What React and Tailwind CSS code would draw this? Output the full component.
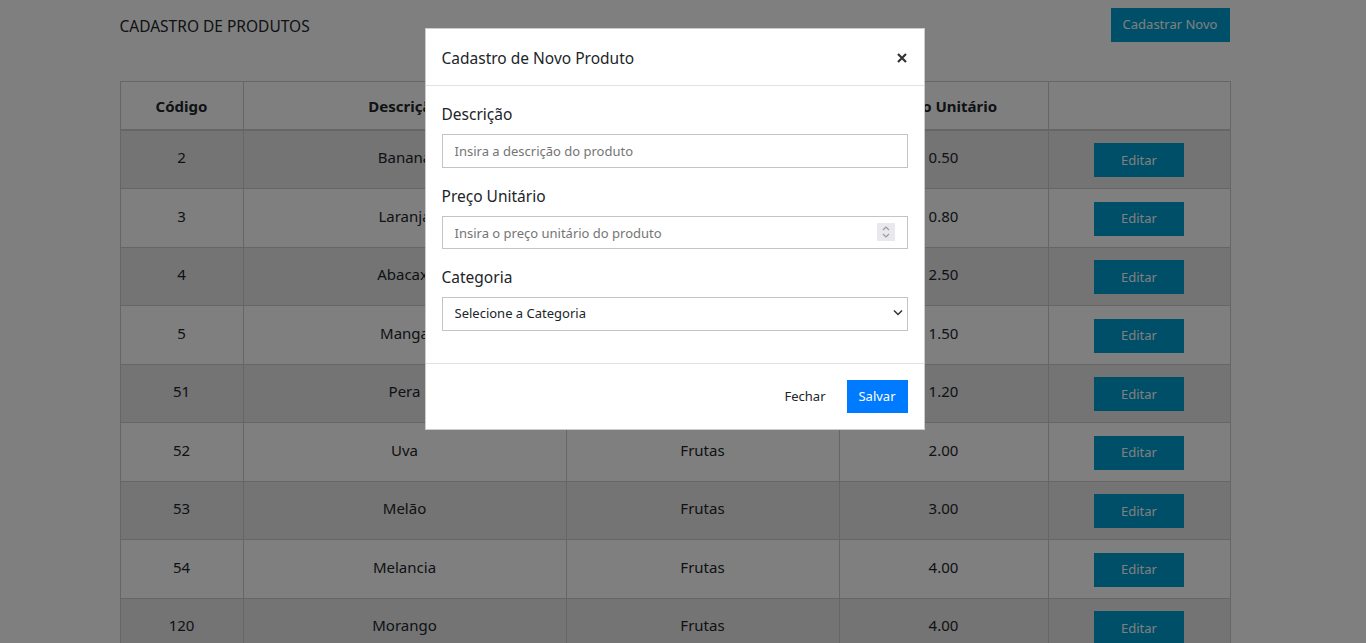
import React from 'react';

const produtos = [
  { codigo: 2, descricao: 'Banana', categoria: 'Frutas', preco: '0.50' },
  { codigo: 3, descricao: 'Laranja', categoria: 'Frutas', preco: '0.80' },
  { codigo: 4, descricao: 'Abacaxi', categoria: 'Frutas', preco: '2.50' },
  { codigo: 5, descricao: 'Manga', categoria: 'Frutas', preco: '1.50' },
  { codigo: 51, descricao: 'Pera', categoria: 'Frutas', preco: '1.20' },
  { codigo: 52, descricao: 'Uva', categoria: 'Frutas', preco: '2.00' },
  { codigo: 53, descricao: 'Melão', categoria: 'Frutas', preco: '3.00' },
  { codigo: 54, descricao: 'Melancia', categoria: 'Frutas', preco: '4.00' },
  { codigo: 120, descricao: 'Morango', categoria: 'Frutas', preco: '4.00' },
];

const font = { fontFamily: '"Noto Sans", "Open Sans", sans-serif' };

const ProdutoModal = () => (
  <div className="fixed inset-0 bg-black/50 overflow-hidden pr-[17px]">
    <div className="mx-auto mt-[28px] w-[500px] bg-white border border-black/20 text-[#212529]">
      {/* cabeçalho */}
      <div className="flex items-center justify-between h-[57px] px-4 border-b border-[#dee2e6]">
        <h5 className="text-[15.5px] leading-6 mt-[1px]">Cadastro de Novo Produto</h5>
        <button className="text-[#333] mt-[1px]">
          <svg width="12" height="12" viewBox="0 0 12 12" stroke="currentColor" strokeWidth="2.2">
            <path d="M2 2l8 8M10 2l-8 8" />
          </svg>
        </button>
      </div>

      {/* corpo */}
      <div className="p-4">
        <div className="mb-4">
          <label className="block text-[15.5px] leading-6 mb-2">Descrição</label>
          <input
            className="w-full h-[34px] px-3 border border-[#c4c4c4] text-[13px] placeholder:text-[#757575] outline-none"
            placeholder="Insira a descrição do produto"
          />
        </div>
        <div className="mb-4">
          <label className="block text-[15.5px] leading-6 mb-2">Preço Unitário</label>
          <div className="relative">
            <input
              className="w-full h-[33px] px-3 border border-[#c4c4c4] text-[13px] placeholder:text-[#757575] outline-none"
              placeholder="Insira o preço unitário do produto"
            />
            <div className="absolute right-[13px] top-[7px] w-[18px] h-[18px] bg-[#e9e9ed] flex flex-col items-center justify-center gap-[2px]">
              <svg width="8" height="5" viewBox="0 0 8 5" fill="none" stroke="#9a9a9a" strokeWidth="1.2">
                <path d="M1 4l3-3 3 3" />
              </svg>
              <svg width="8" height="5" viewBox="0 0 8 5" fill="none" stroke="#9a9a9a" strokeWidth="1.2">
                <path d="M1 1l3 3 3-3" />
              </svg>
            </div>
          </div>
        </div>
        <div className="mb-4">
          <label className="block text-[15.5px] leading-6 mb-2">Categoria</label>
          <div className="relative">
            <select className="w-full h-[34px] px-3 border border-[#c4c4c4] text-[13px] text-[#212529] bg-white appearance-none outline-none">
              <option>Selecione a Categoria</option>
            </select>
            <svg className="absolute right-[5px] top-[12px]" width="10" height="7" viewBox="0 0 10 7" fill="none" stroke="#333" strokeWidth="1.5">
              <path d="M1 1.5l4 4 4-4" />
            </svg>
          </div>
        </div>
      </div>

      {/* rodapé */}
      <div className="flex items-center justify-end gap-[9px] px-4 py-4 border-t border-[#dee2e6]">
        <button className="h-[33px] px-3 text-[13px] text-[#212529]">Fechar</button>
        <button className="h-[33px] w-[61px] text-[13px] text-white bg-[#007bff]">Salvar</button>
      </div>
    </div>
  </div>
);

const cell = 'border border-[#cdcdcd] text-center align-middle pt-[9.75px] pb-[13.75px]';

export default function App() {
  return (
    <div className="min-h-screen bg-white pr-[17px]" style={font}>
      <div className="mx-auto w-[1110px] text-[#212529]">
        <div className="flex items-center justify-between pt-2">
          <h4 className="text-[15.5px] leading-6 mt-[2px]">CADASTRO DE PRODUTOS</h4>
          <button className="h-[34px] w-[119px] bg-[#009ed2] text-white text-[13px]">Cadastrar Novo</button>
        </div>

        <table className="mt-[39px] w-full table-fixed border-collapse border border-[#cdcdcd] text-[15px]">
          <colgroup>
            <col className="w-[123px]" />
            <col className="w-[323px]" />
            <col className="w-[273px]" />
            <col className="w-[209px]" />
            <col className="w-[182px]" />
          </colgroup>
          <thead>
            <tr className="h-[48px]">
              <th className="border border-[#cdcdcd] border-b-2 font-bold pt-[2px]">Código</th>
              <th className="border border-[#cdcdcd] border-b-2 font-bold pt-[2px]">Descrição</th>
              <th className="border border-[#cdcdcd] border-b-2 font-bold pt-[2px]">Categoria</th>
              <th className="border border-[#cdcdcd] border-b-2 font-bold pt-[2px]">Preço Unitário</th>
              <th className="border border-[#cdcdcd] border-b-2"></th>
            </tr>
          </thead>
          <tbody>
            {produtos.map((p, i) => (
              <tr key={p.codigo} className={i % 2 === 0 ? 'bg-[#e8e8e8]' : 'bg-white'}>
                <td className={cell}>{p.codigo}</td>
                <td className={cell}>{p.descricao}</td>
                <td className={cell}>{p.categoria}</td>
                <td className={cell}>{p.preco}</td>
                <td className="border border-[#cdcdcd] text-center align-middle pt-[12.75px] pb-[10.75px]">
                  <button className="block mx-auto h-[34px] w-[90px] bg-[#009ed2] text-white text-[13px]">Editar</button>
                </td>
              </tr>
            ))}
          </tbody>
        </table>
      </div>

      <ProdutoModal />
    </div>
  );
}
